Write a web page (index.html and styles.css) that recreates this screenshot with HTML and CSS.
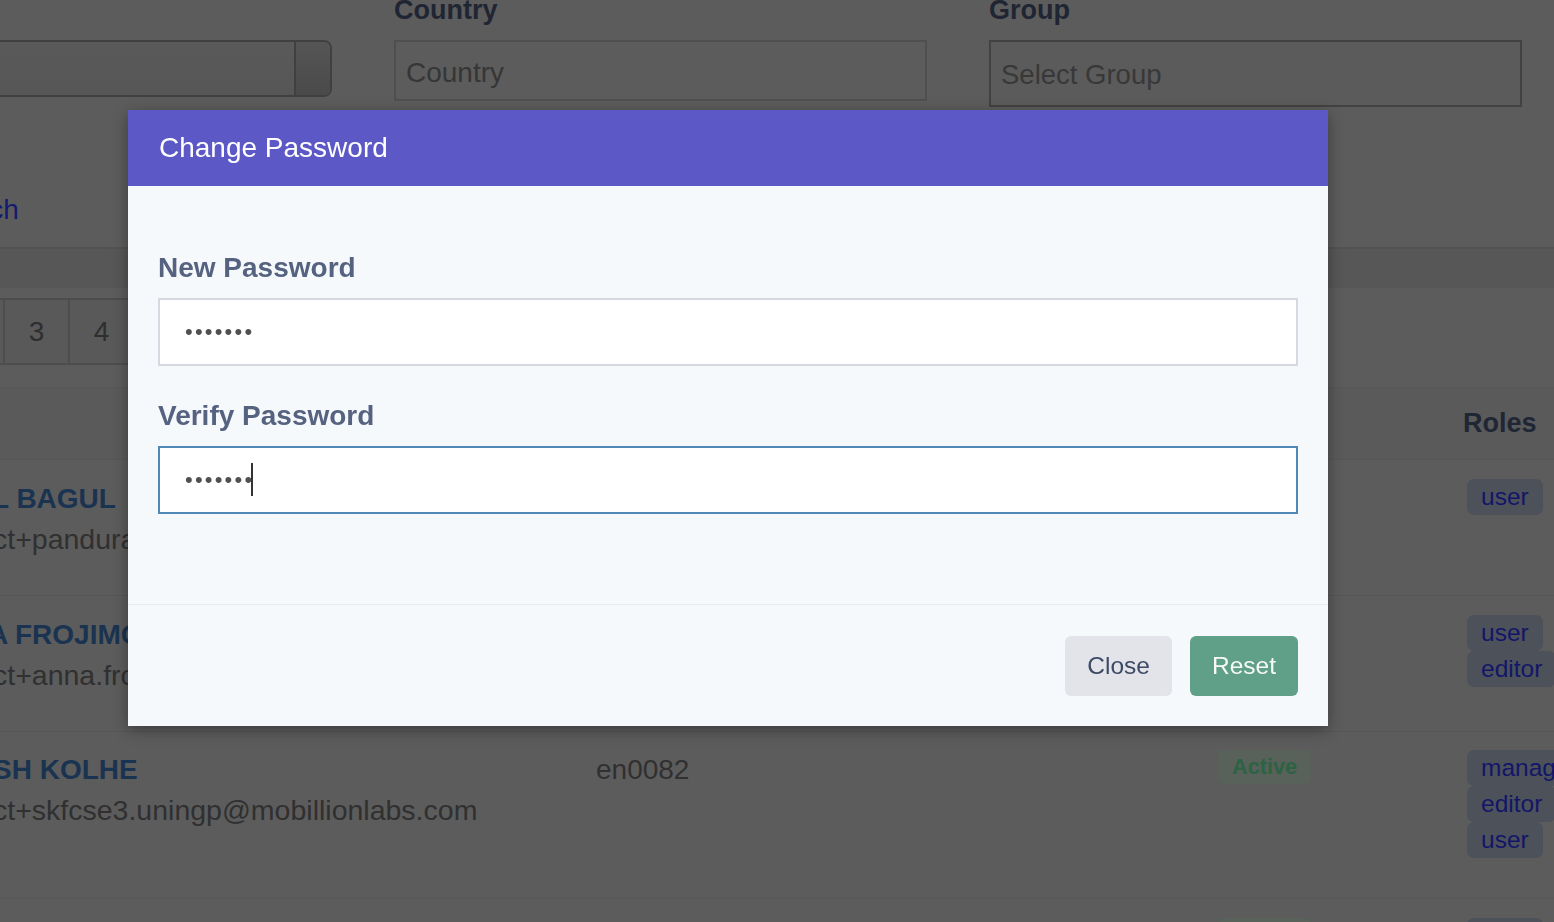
FILE: index.html
```html
<!DOCTYPE html>
<html lang="en">
<head>
<meta charset="utf-8">
<title>Users - Change Password</title>
<link rel="stylesheet" href="styles.css">
</head>
<body>
<div class="page">
  <section class="filters">
    <div class="field">
      <div class="field-label">&nbsp;</div>
      <div class="combo"><span class="combo-input"></span><span class="combo-btn"></span></div>
    </div>
    <div class="field">
      <div class="field-label">Country</div>
      <input class="text-input" type="text" placeholder="Country">
    </div>
    <div class="field">
      <div class="field-label">Group</div>
      <div class="select">Select Group</div>
    </div>
  </section>

  <div class="search-row"><a class="search-link">Search</a></div>

  <div class="band"></div>

  <nav class="pagination">
    <span class="page-item">1</span>
    <span class="page-item">2</span>
    <span class="page-item">3</span>
    <span class="page-item">4</span>
    <span class="page-item">5</span>
  </nav>

  <table class="users">
    <colgroup>
      <col class="col-name"><col class="col-code"><col class="col-status"><col class="col-roles">
    </colgroup>
    <thead>
      <tr><th></th><th></th><th></th><th class="th-roles">Roles</th></tr>
    </thead>
    <tbody>
      <tr>
        <td><div class="name cut-1">L BAGUL</div><div class="email cut-e">ct+pandura</div></td>
        <td></td>
        <td></td>
        <td><span class="role">user</span></td>
      </tr>
      <tr>
        <td><div class="name cut-2">A FROJIMO</div><div class="email cut-e">ct+anna.fro</div></td>
        <td></td>
        <td></td>
        <td><span class="role">user</span><span class="role">editor</span></td>
      </tr>
      <tr class="row-tall">
        <td><div class="name cut-3">SH KOLHE</div><div class="email cut-e">ct+skfcse3.uningp@mobillionlabs.com</div></td>
        <td><div class="code">en0082</div></td>
        <td><span class="status">Active</span></td>
        <td><span class="role">manager</span><span class="role">editor</span><span class="role">user</span></td>
      </tr>
      <tr>
        <td></td>
        <td></td>
        <td><span class="status">Active</span></td>
        <td><span class="role">user</span></td>
      </tr>
    </tbody>
  </table>
</div>

<div class="backdrop">
  <div class="modal" role="dialog" aria-labelledby="modal-title">
    <div class="modal-header"><h2 id="modal-title" class="modal-title">Change Password</h2></div>
    <div class="modal-body">
      <div class="form-group">
        <label class="form-label" for="pw1">New Password</label>
        <input id="pw1" class="form-input" type="password" value="1234567">
      </div>
      <div class="form-group">
        <label class="form-label" for="pw2">Verify Password</label>
        <div class="input-wrap">
          <input id="pw2" class="form-input is-focused" type="password" value="1234567">
          <span class="caret"></span>
        </div>
      </div>
    </div>
    <div class="modal-footer">
      <button class="btn btn-close" type="button">Close</button>
      <button class="btn btn-reset" type="button">Reset</button>
    </div>
  </div>
</div>
</body>
</html>
```

FILE: styles.css
```css
* { box-sizing: border-box; }

html, body {
  margin: 0;
  padding: 0;
  width: 1554px;
  height: 922px;
  overflow: hidden;
  background: #5c5c5c;
  font-family: "Liberation Sans", Arial, Helvetica, sans-serif;
  color: #2f2f2f;
}

.page {
  margin-top: -10px;
  display: flex;
  flex-direction: column;
}

/* ---------- filters ---------- */
.filters {
  display: grid;
  grid-template-columns: 533px 533px 533px;
  column-gap: 62px;
  margin-left: -201px;
  align-items: start;
}

.field-label {
  font-size: 27px;
  font-weight: 700;
  line-height: 40px;
  color: #1f2533;
  margin-bottom: 10px;
}

.combo {
  display: flex;
  height: 57px;
  border: 2px solid #404040;
  border-radius: 0 8px 8px 0;
  overflow: hidden;
}
.combo-input {
  flex: 1;
  background: linear-gradient(#5a5a5a, #565656);
}
.combo-btn {
  width: 36px;
  border-left: 2px solid #404040;
  background: linear-gradient(#555555, #4a4a4a);
}

.text-input {
  display: block;
  width: 100%;
  height: 61px;
  border: 2px solid #4f4f4f;
  background: #5c5c5c;
  padding: 4px 10px 0;
  font-family: inherit;
  font-size: 28px;
  color: #383838;
  outline: none;
}
.text-input::placeholder { color: #363636; }

.select {
  height: 67px;
  border: 2px solid #424242;
  background: #5b5b5b;
  padding: 0 10px;
  font-size: 27.5px;
  line-height: 65px;
  color: #383838;
}

/* ---------- search link ---------- */
.search-row {
  margin-top: 82px;
  height: 42px;
  line-height: 42px;
  font-size: 28px;
}
.search-link {
  display: inline-block;
  margin-left: -70px;
  color: #141a6e;
}

/* ---------- band ---------- */
.band {
  margin-top: 16px;
  height: 41px;
  border-top: 2px solid #535353;
  background: #575757;
}

/* ---------- pagination ---------- */
.pagination {
  display: flex;
  margin-top: 10px;
  margin-left: -125px;
}
.page-item {
  width: 67px;
  height: 67px;
  margin-left: -2px;
  border: 2px solid #4d4d4d;
  background: #595959;
  display: flex;
  align-items: center;
  justify-content: center;
  font-size: 28px;
  color: #2e2e2e;
}

/* ---------- table ---------- */
.users {
  margin-top: 22px;
  width: 1620px;
  border-collapse: collapse;
  table-layout: fixed;
}
.col-name { width: 596px; }
.col-code { width: 622px; }
.col-status { width: 245px; }
.col-roles { width: 157px; }

.users thead tr {
  border-top: 1px solid #575757;
  border-bottom: 1px solid #575757;
  background: #5a5a5a;
}
.users th {
  height: 72px;
  padding: 0;
  text-align: left;
  vertical-align: middle;
  font-size: 27px;
  font-weight: 700;
  color: #1f2634;
}
.users tbody tr { border-bottom: 1px solid #575757; }
.users td {
  vertical-align: top;
  padding: 19px 0 36px;
  overflow: hidden;
  white-space: nowrap;
}
.users .row-tall td { padding-top: 18px; padding-bottom: 40px; }

.name {
  font-size: 28px;
  font-weight: 700;
  line-height: 40px;
  color: #1a3350;
}
.cut-1 { margin-left: -8px; }
.cut-2 { margin-left: -12px; }
.cut-3 { margin-left: -7px; }

.email {
  font-size: 28.5px;
  line-height: 40px;
  color: #303030;
}
.cut-e { margin-left: -7px; }

.code {
  font-size: 28px;
  line-height: 40px;
  color: #303030;
}

.status {
  display: inline-block;
  height: 34px;
  line-height: 34px;
  padding: 0 14px;
  border-radius: 6px;
  background: #58615a;
  color: #2c6343;
  font-size: 21.7px;
  font-weight: 700;
}

.role {
  display: block;
  width: fit-content;
  margin-left: 4px;
  height: 36px;
  line-height: 36px;
  padding: 0 14px;
  border-radius: 7px;
  background: #4c515a;
  color: #131668;
  font-size: 24.5px;
}

/* ---------- modal ---------- */
.backdrop {
  position: fixed;
  inset: 0;
}

.modal {
  position: absolute;
  left: 128px;
  top: 110px;
  width: 1200px;
  background: #f6f9fc;
  box-shadow: 0 4px 14px rgba(0, 0, 0, 0.35);
}

.modal-header {
  height: 76px;
  background: #5c59c6;
  padding: 0 31px;
  display: flex;
  align-items: center;
}
.modal-title {
  margin: 0;
  font-size: 28px;
  font-weight: 400;
  line-height: 76px;
  color: #ffffff;
}

.modal-body {
  padding: 61px 30px 61px;
}

.form-group { margin-bottom: 29px; }

.form-label {
  display: block;
  font-size: 28px;
  font-weight: 700;
  line-height: 42px;
  color: #566380;
  margin-bottom: 9px;
}

.input-wrap { position: relative; }

.form-input {
  display: block;
  width: 100%;
  height: 68px;
  border: 2px solid #d5d9e1;
  background: #ffffff;
  padding: 0 23px 0 25px;
  font-family: "Liberation Sans", Arial, sans-serif;
  font-size: 22px;
  letter-spacing: 2.2px;
  color: #505050;
  outline: none;
}
.form-input.is-focused { border-color: #5089b7; }

.caret {
  position: absolute;
  left: 93px;
  top: 17px;
  width: 2px;
  height: 33px;
  background: #333333;
}

.modal-footer {
  border-top: 1px solid #e9edf1;
  padding: 31px 30px 30px;
  display: flex;
  justify-content: flex-end;
  gap: 18px;
}

.btn {
  height: 60px;
  padding: 0 22px;
  border: none;
  border-radius: 6px;
  font-family: inherit;
  font-size: 24.5px;
}
.btn-close { background: #e2e4e9; color: #3d4a65; }
.btn-reset { background: #60a088; color: #f6f9f7; }
```
